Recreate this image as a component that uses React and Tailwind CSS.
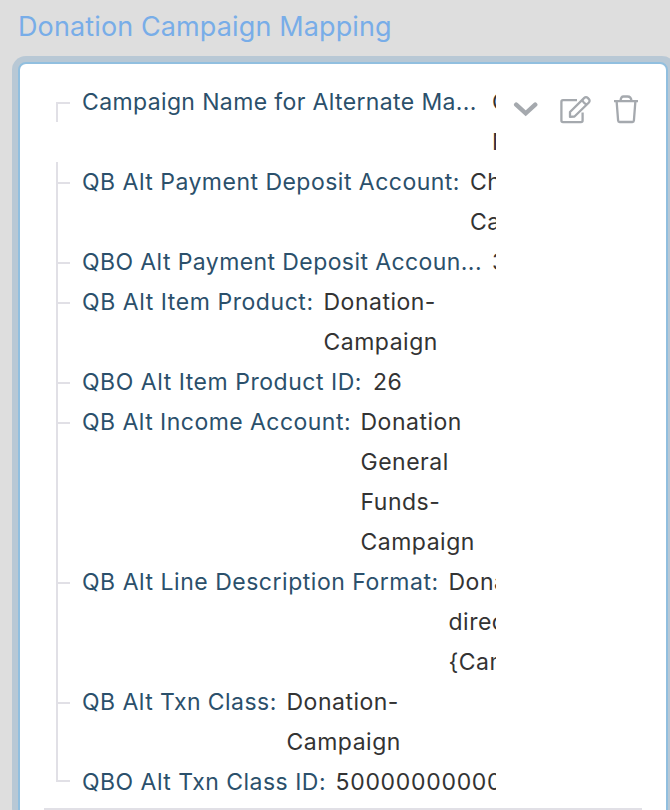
const rows = [
  { label: "Campaign Name for Alternate Ma...", width: "w-[410px]", size: "tracking-[0.37px]", values: ["Campaign", "Name"] },
  { label: "QB Alt Payment Deposit Account:", width: "w-[388px]", size: "tracking-[0.48px]", values: ["Checking", "Campaign"] },
  { label: "QBO Alt Payment Deposit Accoun...", width: "w-[410px]", size: "tracking-[0.41px]", values: ["35"] },
  { label: "QB Alt Item Product:", width: "w-[241.500px]", size: "tracking-[0.56px]", values: ["Donation-", "Campaign"] },
  { label: "QBO Alt Item Product ID:", width: "w-[291px]", size: "tracking-[0.53px]", values: ["26"] },
  { label: "QB Alt Income Account:", width: "w-[278.500px]", size: "tracking-[0.46px]", values: ["Donation", "General", "Funds-", "Campaign"] },
  { label: "QB Alt Line Description Format:", width: "w-[366.500px]", size: "tracking-[0.52px]", values: ["Donation", "directed to", "{Campaign}"] },
  { label: "QB Alt Txn Class:", width: "w-[204.500px]", size: "tracking-[0.45px]", values: ["Donation-", "Campaign"] },
  { label: "QBO Alt Txn Class ID:", width: "w-[253.500px]", size: "tracking-[0.48px]", values: ["500000000000"], valueTracking: "tracking-[0.7px]" },
];

function Branch({ first, last }) {
  if (first) return <div className="mt-5 h-5 w-3.5 shrink-0 border-t-2 border-l-2 border-[#e1e0e6]" />;
  if (last) return <div className="h-5 w-3.5 shrink-0 border-b-2 border-l-2 border-[#e1e0e6]" />;
  return (
    <div className="w-3.5 shrink-0 border-l-2 border-[#e1e0e6] pt-5">
      <div className="h-0.5 bg-[#e1e0e6]" />
    </div>
  );
}

function Row({ row, first, last }) {
  return (
    <div className="flex">
      <Branch first={first} last={last} />
      <div className={`ml-3 shrink-0 text-[#2b506b] ${row.width} ${row.size}`}>{row.label}</div>
      <div className={`shrink-0 text-[#333333] ${row.valueTracking || "tracking-[0.5px]"}`}>
        {row.values.map((v) => (
          <div key={v}>{v}</div>
        ))}
      </div>
    </div>
  );
}

export default function App() {
  return (
    <div className="h-[810px] w-[670px] overflow-hidden bg-[#dedede] font-['Inter',sans-serif]">
      <h1 className="h-14 pl-[18px] text-[27px] leading-[54px] tracking-[0.12px] whitespace-nowrap text-[#78ade8]">Donation Campaign Mapping</h1>
      <div className="ml-3 w-[664px] rounded-[14px] bg-[#b8c8d5] p-1.5 pb-0">
        <div className="h-[760px] w-[650px] rounded-[8px] border-2 border-[#91bfdf] bg-white pt-[18px] pl-6">
          <div className="flex w-[598px]">
            <div className="ml-3 w-[440px] shrink-0 overflow-hidden text-[23px] leading-10 whitespace-nowrap">
              {rows.map((row, i) => (
                <Row key={row.label} row={row} first={i === 0} last={i === rows.length - 1} />
              ))}
            </div>
            <div className="mt-3 ml-[17px] flex h-8 text-[#a5a9ae]">
              <svg className="mr-[21px] shrink-0" width="25" height="32" viewBox="0 0 25 32" fill="none" stroke="currentColor" strokeWidth="4.5" strokeLinecap="round">
                <path d="M3.200 10.700 12.700 19.300l9.500-8.600" strokeLinejoin="miter" />
              </svg>
              <svg className="mr-[21px] shrink-0" width="33" height="32" viewBox="0 0 33 32" fill="none" stroke="currentColor" strokeWidth="2.3" strokeLinejoin="round">
                <path d="M18 6.200H4a1.600 1.600 0 0 0-1.600 1.600v18.800A1.600 1.600 0 0 0 4 28.200h18a1.600 1.600 0 0 0 1.600-1.600V18.500" />
                <path d="M11 22.800v-4.800L25.300 3.900a2.400 2.400 0 0 1 3.400 0l1.200 1.200a2.400 2.400 0 0 1 0 3.400L15.500 22.500Z M23.300 6q1.200 3.500 4.500 4.500" />
              </svg>
              <svg className="shrink-0" width="26" height="32" viewBox="0 0 26 32" fill="none" stroke="currentColor" strokeWidth="2.3" strokeLinejoin="round">
                <path d="M1 7.200h24M7.500 7q.3-4.500 3-4.500h4q3.700 0 4 4.500M3.600 7.200l1.500 19.300q.1 1.500 1.500 1.500h12.800q1.400 0 1.500-1.500L22.400 7.200" />
              </svg>
            </div>
          </div>
          <div className="mt-1.5 h-0.5 w-[598px] bg-[#e1e0e6]" />
        </div>
      </div>
    </div>
  );
}
